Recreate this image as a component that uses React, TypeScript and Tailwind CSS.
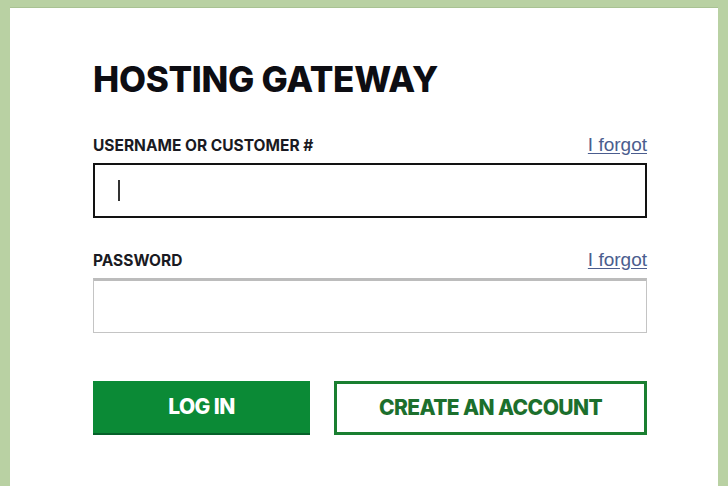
export default function App() {
  return (
    <div className="w-[728px] h-[486px] bg-[#b9d1a3] pt-[7px] pl-[10px] pr-[10px] overflow-hidden">
      <div
        className="h-full bg-white border-t border-[#a9c293] pl-[83px] pr-[71px] pt-[51px]"
        style={{ fontFamily: 'Inter, "Liberation Sans", sans-serif' }}
      >
        <h1 className="text-[35px] leading-[40px] font-extrabold text-[#0d0d12] tracking-[-0.3px]">
          HOSTING GATEWAY
        </h1>

        <div className="mt-[36px] flex items-end justify-between h-[20px]">
          <label className="text-[15.5px] font-bold text-[#1a1a22] leading-[18px]">
            USERNAME OR CUSTOMER #
          </label>
          <a
            href="#"
            className="text-[19px] leading-[20px] text-[#4b5d8e] underline underline-offset-2"
            style={{ fontFamily: '"Liberation Sans", Arial, sans-serif' }}
          >
            I forgot
          </a>
        </div>
        <div className="mt-[8px] h-[55px] border-2 border-[#121212] flex items-center pl-[23px]">
          <div className="w-[2px] h-[21px] bg-[#333]" />
        </div>

        <div className="mt-[32px] flex items-end justify-between h-[20px]">
          <label className="text-[15.5px] font-bold text-[#1a1a22] leading-[18px]">
            PASSWORD
          </label>
          <a
            href="#"
            className="text-[19px] leading-[20px] text-[#4b5d8e] underline underline-offset-2"
            style={{ fontFamily: '"Liberation Sans", Arial, sans-serif' }}
          >
            I forgot
          </a>
        </div>
        <div className="mt-[8px] h-[55px] border border-[#c4c4c4] border-t-[3px] border-t-[#bcbcbc]" />

        <div className="mt-[48px] flex gap-[24px]">
          <button className="w-[217px] h-[54px] bg-[#0b8a36] border-b-2 border-[#06612a] text-white text-[21px] font-extrabold tracking-[-0.6px]">
            LOG IN
          </button>
          <button className="w-[313px] h-[54px] border-[3px] border-[#1a7f31] text-[#1c6f2d] text-[21px] font-extrabold tracking-[-0.6px]">
            CREATE AN ACCOUNT
          </button>
        </div>
      </div>
    </div>
  );
}
